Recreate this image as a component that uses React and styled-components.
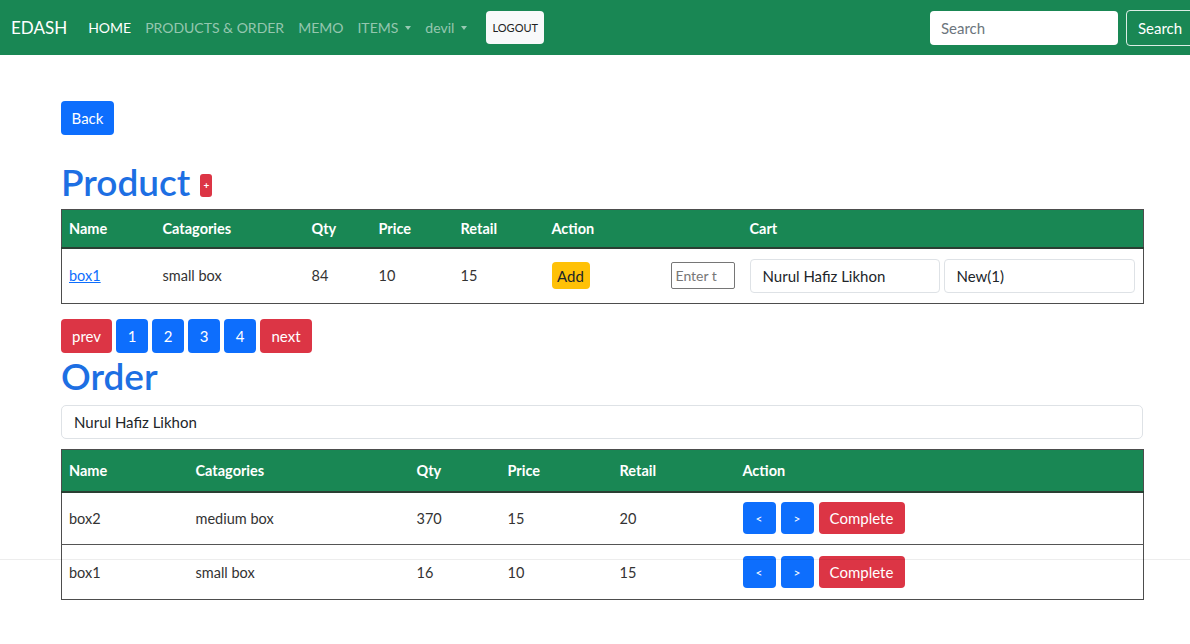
import React from "react";
import styled, { createGlobalStyle } from "styled-components";

const GlobalStyle = createGlobalStyle`
  * { box-sizing: border-box; }
  body {
    margin: 0;
    font-family: Lato, "Open Sans", sans-serif;
    color: #212529;
    background: #fff;
  }
`;

const Page = styled.div`
  position: relative;
  width: 1190px;
  height: 644px;
  overflow: hidden;
`;

const NavBar = styled.nav`
  height: 55px;
  background: #198754;
  display: flex;
  align-items: center;
  padding-left: 11px;
  overflow: hidden;
`;

const Brand = styled.div`
  font-size: 17px;
  color: #fff;
  margin-right: 14px;
`;

const NavLink = styled.div`
  font-size: 14px;
  color: ${(p) => (p.$active ? "#ffffff" : "rgba(255,255,255,0.55)")};
  padding: 0 7px;
  display: flex;
  align-items: center;
  gap: 7px;
`;

const Caret = styled.span`
  display: inline-block;
  width: 0;
  height: 0;
  border-left: 3.5px solid transparent;
  border-right: 3.5px solid transparent;
  border-top: 4px solid currentColor;
  margin-top: 1px;
`;

const LogoutButton = styled.button`
  margin-left: 12px;
  width: 58px;
  height: 33px;
  background: #f8f9fa;
  border: none;
  border-radius: 4px;
  font-family: inherit;
  font-size: 11px;
  color: #222;
  padding: 0;
`;

const Spacer = styled.div`
  flex: 1;
`;

const SearchInput = styled.input`
  width: 188px;
  height: 34px;
  border: none;
  border-radius: 4px;
  padding: 0 11px;
  font-family: inherit;
  font-size: 15px;
  margin-right: 8px;
  &::placeholder { color: #6c757d; }
`;

const SearchButton = styled.button`
  flex: none;
  width: 72px;
  height: 36px;
  margin-right: -8px;
  background: transparent;
  border: 1px solid rgba(255, 255, 255, 0.85);
  border-radius: 4px;
  color: #fff;
  font-family: inherit;
  font-size: 15px;
  text-align: left;
  padding: 0 11px;
`;

const Container = styled.main`
  margin-left: 61px;
  width: 1082px;
  padding-top: 46px;
`;

const Btn = styled.button`
  height: ${(p) => p.$h || 34}px;
  width: ${(p) => (p.$w ? p.$w + "px" : "auto")};
  padding: 0;
  border: none;
  border-radius: 4px;
  font-family: inherit;
  font-size: ${(p) => p.$fs || 15}px;
  color: ${(p) => (p.$variant === "warning" ? "#212529" : "#fff")};
  background: ${(p) =>
    p.$variant === "danger"
      ? "#dc3545"
      : p.$variant === "warning"
      ? "#ffc107"
      : "#0d6efd"};
  display: inline-flex;
  align-items: center;
  justify-content: center;
`;

const Heading = styled.h1`
  margin: ${(p) => p.$mt || 0}px 0 0;
  font-size: 37px;
  font-weight: 600;
  color: #1d6fe3;
  line-height: 46px;
  display: flex;
  align-items: center;
  gap: 10px;
`;

const AddBadge = styled.span`
  width: 12px;
  height: 23px;
  border-radius: 3px;
  background: #dc3545;
  color: #fff;
  font-size: 10px;
  font-weight: 700;
  display: inline-flex;
  align-items: center;
  justify-content: center;
  margin-top: 6px;
`;

const Table = styled.table`
  width: 1082px;
  table-layout: fixed;
  border-collapse: collapse;
  border: 1px solid #4d4d4d;
  margin-top: ${(p) => p.$mt || 0}px;
`;

const HeadRow = styled.tr`
  height: ${(p) => p.$h}px;
  background: #198754;
  border-bottom: 2px solid #2b3f33;
`;

const Th = styled.th`
  text-align: left;
  color: #fff;
  font-size: 14.5px;
  font-weight: 700;
  padding: 0 7px;
`;

const Row = styled.tr`
  height: ${(p) => p.$h}px;
  border-top: ${(p) => (p.$divider ? "1.5px solid #555" : "none")};
`;

const Td = styled.td`
  padding: 0 7px;
  font-size: 14.5px;
  color: #333;
  vertical-align: middle;
`;

const ItemLink = styled.a`
  color: #0d6efd;
  text-decoration: underline;
`;

const TinyInput = styled.input`
  width: 64px;
  height: 27px;
  border: 1px solid #767676;
  border-radius: 2px;
  padding: 0 4px;
  font-family: inherit;
  font-size: 14px;
  &::placeholder { color: #777; }
`;

const CartFields = styled.div`
  display: flex;
  gap: 4px;
`;

const Field = styled.input`
  width: ${(p) => (p.$w ? p.$w + "px" : "100%")};
  height: 34px;
  border: 1px solid #dee2e6;
  border-radius: 4px;
  padding: 0 12px;
  font-family: inherit;
  font-size: 15px;
  color: #212529;
  background: #fff;
`;

const Pager = styled.div`
  display: flex;
  gap: 4px;
  margin-top: 15px;
`;

const OrderField = styled(Field)`
  margin-top: 6px;
  border-radius: 5px;
`;

const Actions = styled.div`
  display: flex;
  gap: 5px;
`;

const FaintRule = styled.div`
  position: absolute;
  left: 0;
  right: 0;
  top: 559px;
  height: 1px;
  background: rgba(0, 0, 0, 0.07);
  pointer-events: none;
`;

const orders = [
  { name: "box2", cat: "medium box", qty: 370, price: 15, retail: 20, h: 53 },
  { name: "box1", cat: "small box", qty: 16, price: 10, retail: 15, h: 55 },
];

export default function App() {
  return (
    <Page>
      <GlobalStyle />
      <NavBar>
        <Brand>EDASH</Brand>
        <NavLink $active>HOME</NavLink>
        <NavLink>PRODUCTS &amp; ORDER</NavLink>
        <NavLink>MEMO</NavLink>
        <NavLink>
          ITEMS <Caret />
        </NavLink>
        <NavLink>
          devil <Caret />
        </NavLink>
        <LogoutButton>LOGOUT</LogoutButton>
        <Spacer />
        <SearchInput placeholder="Search" />
        <SearchButton>Search</SearchButton>
      </NavBar>

      <Container>
        <Btn $w={53}>Back</Btn>
        <Heading $mt={24}>
          Product <AddBadge>+</AddBadge>
        </Heading>

        <Table $mt={4}>
          <colgroup>
            <col style={{ width: 94 }} />
            <col style={{ width: 149 }} />
            <col style={{ width: 67 }} />
            <col style={{ width: 82 }} />
            <col style={{ width: 91 }} />
            <col style={{ width: 119 }} />
            <col style={{ width: 79 }} />
            <col style={{ width: 401 }} />
          </colgroup>
          <thead>
            <HeadRow $h={38}>
              <Th>Name</Th>
              <Th>Catagories</Th>
              <Th>Qty</Th>
              <Th>Price</Th>
              <Th>Retail</Th>
              <Th>Action</Th>
              <Th></Th>
              <Th>Cart</Th>
            </HeadRow>
          </thead>
          <tbody>
            <Row $h={56}>
              <Td>
                <ItemLink href="#">box1</ItemLink>
              </Td>
              <Td>small box</Td>
              <Td>84</Td>
              <Td>10</Td>
              <Td>15</Td>
              <Td>
                <Btn $variant="warning" $w={38} $h={27}>
                  Add
                </Btn>
              </Td>
              <Td>
                <TinyInput placeholder="Enter t" />
              </Td>
              <Td>
                <CartFields>
                  <Field $w={190} defaultValue="Nurul Hafiz Likhon" />
                  <Field $w={191} defaultValue="New(1)" />
                </CartFields>
              </Td>
            </Row>
          </tbody>
        </Table>

        <Pager>
          <Btn $variant="danger" $w={51}>prev</Btn>
          <Btn $w={32}>1</Btn>
          <Btn $w={32}>2</Btn>
          <Btn $w={32}>3</Btn>
          <Btn $w={32}>4</Btn>
          <Btn $variant="danger" $w={52}>next</Btn>
        </Pager>

        <Heading>Order</Heading>
        <OrderField defaultValue="Nurul Hafiz Likhon" />

        <Table $mt={10}>
          <colgroup>
            <col style={{ width: 127 }} />
            <col style={{ width: 221 }} />
            <col style={{ width: 91 }} />
            <col style={{ width: 112 }} />
            <col style={{ width: 123 }} />
            <col style={{ width: 408 }} />
          </colgroup>
          <thead>
            <HeadRow $h={42}>
              <Th>Name</Th>
              <Th>Catagories</Th>
              <Th>Qty</Th>
              <Th>Price</Th>
              <Th>Retail</Th>
              <Th>Action</Th>
            </HeadRow>
          </thead>
          <tbody>
            {orders.map((o, i) => (
              <Row key={i} $h={o.h} $divider={i > 0}>
                <Td>{o.name}</Td>
                <Td>{o.cat}</Td>
                <Td>{o.qty}</Td>
                <Td>{o.price}</Td>
                <Td>{o.retail}</Td>
                <Td>
                  <Actions>
                    <Btn $w={33} $h={32} $fs={12}>&lt;</Btn>
                    <Btn $w={33} $h={32} $fs={12}>&gt;</Btn>
                    <Btn $variant="danger" $w={86} $h={32}>
                      Complete
                    </Btn>
                  </Actions>
                </Td>
              </Row>
            ))}
          </tbody>
        </Table>
      </Container>
      <FaintRule />
    </Page>
  );
}
